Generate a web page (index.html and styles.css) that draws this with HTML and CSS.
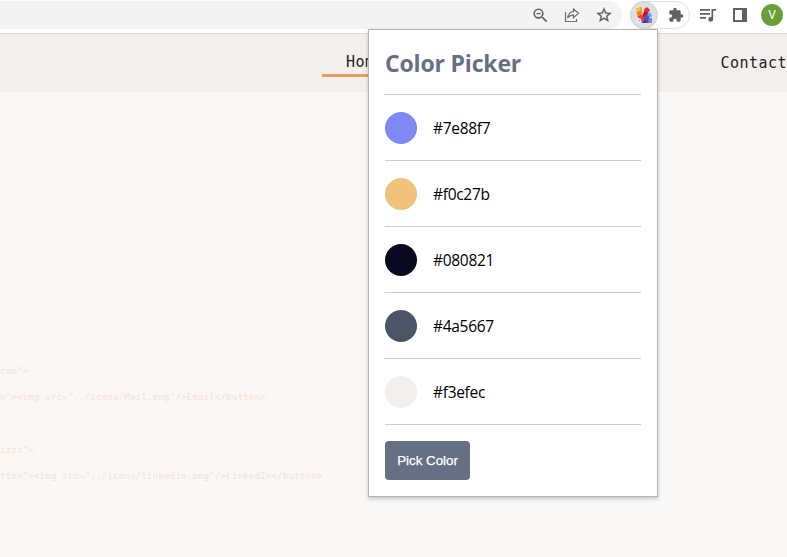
FILE: index.html
```html
<!DOCTYPE html>
<html lang="en">
<head>
<meta charset="utf-8">
<title>Color Picker</title>
<link rel="stylesheet" href="styles.css">
</head>
<body>
<div class="toolbar">
  <div class="omnibox">
    <svg class="icon" viewBox="0 0 24 24"><path d="M15.5 14h-.79l-.28-.27A6.47 6.47 0 0 0 16 9.5 6.5 6.5 0 1 0 9.5 16c1.61 0 3.09-.59 4.23-1.57l.27.28v.79l5 4.99L20.49 19l-4.99-5zm-6 0a4.5 4.5 0 1 1 0-9 4.5 4.5 0 0 1 0 9zM7 8.7h5v1.6H7z"/></svg>
    <svg class="icon share" viewBox="0 0 16 16"><path d="M1.500 5v9.500h11V12M9.500 2l5 4.300-5 4.300V8.200C6.700 8.200 4.900 9 3.500 11c.5-3.500 2.500-6 6-6.500z"/></svg>
    <svg class="icon star" viewBox="0 0 24 24"><path d="M22 9.240l-7.190-.62L12 2 9.190 8.630 2 9.240l5.460 4.730L5.820 21 12 17.270 18.180 21l-1.630-7.030L22 9.240zM12 15.400l-3.760 2.270 1-4.280-3.320-2.880 4.380-.38L12 6.100l1.710 4.040 4.380.38-3.320 2.880 1 4.280L12 15.400z"/></svg>
  </div>
  <div class="extensions">
    <span class="active-extension">
      <svg class="palette" viewBox="0 0 18 18">
        <path fill="#554bb0" d="M7 17l3-5h7v5z"/><path fill="#8580d2" d="M13.500 12H17v5h-3.500z"/><path fill="#3b3196" d="M7 17l2-3.500h2V17z"/>
        <path fill="#58a6f5" d="M12 8.500L15.300 6.500 17 10.300l-4 2z"/><path fill="#2464dc" d="M7.500 13l5.200-4.500 1.700 3.200L8 15.500z"/>
        <path fill="#d92b3c" d="M9 3.500L11.500 1l3.500 2.500-2 4z"/><path fill="#b51547" d="M7 10.500l2.500-6.500 4 3-4.500 5.500z"/>
        <path fill="#ffc02c" d="M1 2.500L5 1l1.300 4-4.500 1.500z"/><path fill="#f57d1e" d="M1.500 6l4.700-1.300L8 10l-5 1.500z"/>
        <path fill="#fb9424" d="M5 1h1.500l1 6-1.500 2z"/>
        <path fill="#ee3b33" d="M2.500 10.500L7 8.500 9.500 14l-3 2z"/>
        <circle cx="4" cy="14.500" r="2.200" fill="#f0f3fa"/><circle cx="4" cy="14.500" r=".7" fill="#2379b9"/>
      </svg>
    </span>
    <svg class="icon puzzle" viewBox="0 0 24 24"><path d="M20.500 11H19V7c0-1.100-.9-2-2-2h-4V3.500a2.500 2.500 0 0 0-5 0V5H4c-1.100 0-1.990.9-1.990 2v3.800H3.500a2.700 2.700 0 0 1 0 5.400H2V20c0 1.100.9 2 2 2h3.800v-1.500a2.700 2.700 0 0 1 5.400 0V22H17c1.100 0 2-.9 2-2v-4h1.500a2.500 2.500 0 0 0 0-5z"/></svg>
  </div>
  <svg class="icon queue" viewBox="0 0 18 16"><path d="M1 2h10v1.700H1zM1 6h10v1.700H1zM1 10h6v1.700H1zM12.500 2H17v1.700h-2.800v8.600a2.400 2.400 0 1 1-1.700-2.300z"/></svg>
  <svg class="icon panel" viewBox="0 0 14 14"><path fill-rule="evenodd" d="M0 0h14v14H0zM2 2v10h7V2z"/></svg>
  <span class="avatar">V</span>
</div>
<nav class="site-nav">
  <span class="nav-link current">Home</span>
  <span class="nav-link">Contact</span>
</nav>
<main class="page">
<pre class="code">com"&gt;

n"&gt;&lt;img src="../icons/Mail.png"/&gt;Email&lt;/button&gt;



izzi"&gt;

tton"&gt;&lt;img src="../icons/linkedin.png"/&gt;LinkedIn&lt;/button&gt;</pre>
</main>
<section class="popup">
  <h1>Color Picker</h1>
  <ul>
    <li><span class="swatch periwinkle"></span>#7e88f7</li>
    <li><span class="swatch sand"></span>#f0c27b</li>
    <li><span class="swatch midnight"></span>#080821</li>
    <li><span class="swatch slate"></span>#4a5667</li>
    <li><span class="swatch linen"></span>#f3efec</li>
  </ul>
  <button>Pick Color</button>
</section>
</body>
</html>
```
FILE: styles.css
```css
* { box-sizing: border-box; }
body { margin: 0; width: 787px; height: 557px; overflow: hidden; background: #f9f8f6; position: relative; }
.toolbar { height: 34px; background: #fff; border-bottom: 1px solid #dcdcdc; display: flex; align-items: flex-start; padding-top: 1px; }
.omnibox { width: 622px; height: 28px; background: #f1f3f4; border-radius: 0 14px 14px 0; display: flex; align-items: center; justify-content: flex-end; gap: 16px; padding-right: 10px; flex: none; }
.icon { width: 16px; height: 16px; fill: #5f6368; flex: none; display: block; }
.omnibox .icon:first-child { width: 19px; height: 19px; margin-right: -2px; }
.share { fill: none; stroke: #6b6f74; stroke-width: 1.2; }
.star { width: 18px; height: 18px; margin: 0 -1px 1px; stroke: #5f6368; stroke-width: .4; }
.extensions { width: 60px; height: 28px; margin-left: 8px; border: 1px solid #dfe1e5; border-radius: 14px; display: flex; align-items: center; flex: none; }
.active-extension { width: 28px; height: 28px; margin-left: -1px; border: 1px solid #d2d3d5; border-radius: 50%; background: #dedfe1; display: flex; align-items: center; justify-content: center; flex: none; }
.palette { width: 18px; height: 18px; flex: none; }
.puzzle { margin-left: 10px; }
.queue { width: 18px; margin: 6px 0 0 9px; }
.panel { width: 14px; height: 14px; margin: 7px 0 0 16px; }
.avatar { width: 22px; height: 22px; margin: 3px 0 0 14px; border-radius: 50%; background: #689f38; color: #fff; font: 12px/22px Roboto, sans-serif; text-align: center; flex: none; }
.site-nav { height: 58px; background: #f3efec; display: flex; align-items: flex-start; justify-content: space-between; padding: 14px 0 0 322px; }
.nav-link { height: 29px; font: 15px/31px "DejaVu Sans Mono", monospace; letter-spacing: .47px; color: #222; }
.current { padding: 0 24px; border-bottom: 3px solid #e69d5e; line-height: 29px; }
.page { padding-top: 273px; }
.code { margin: 0; font: 9px/13.15px "DejaVu Sans Mono", monospace; letter-spacing: .24px; color: #f7e1cf; }
.popup { position: absolute; left: 368px; top: 29px; width: 290px; height: 468px; padding: 0 16px; background: #fff; border: 1px solid #b5b5b5; box-shadow: 0 2px 4px rgba(0,0,0,.2); font-family: "Open Sans", sans-serif; }
h1 { margin: 0; height: 65px; border-bottom: 1px solid #ccc; font-size: 23px; font-weight: 700; line-height: 67px; letter-spacing: -.17px; color: #667085; }
ul { list-style: none; margin: 0; padding: 0; }
li { height: 66px; border-bottom: 1px solid #ccc; display: flex; align-items: center; gap: 16px; font-size: 15.5px; letter-spacing: -.3px; color: #000; }
.swatch { width: 32px; height: 32px; border-radius: 50%; margin-top: 1px; }
.periwinkle { background: #7e88f7; }
.sand { background: #f0c27b; }
.midnight { background: #080821; }
.slate { background: #4a5667; }
.linen { background: #f3efec; }
button { display: block; width: 85px; height: 39px; margin-top: 16px; padding: 0; border: 0; border-radius: 4px; background: #667085; color: #fff; font: 13.33px "Liberation Sans", sans-serif; -webkit-text-stroke: .25px #fff; }
```
